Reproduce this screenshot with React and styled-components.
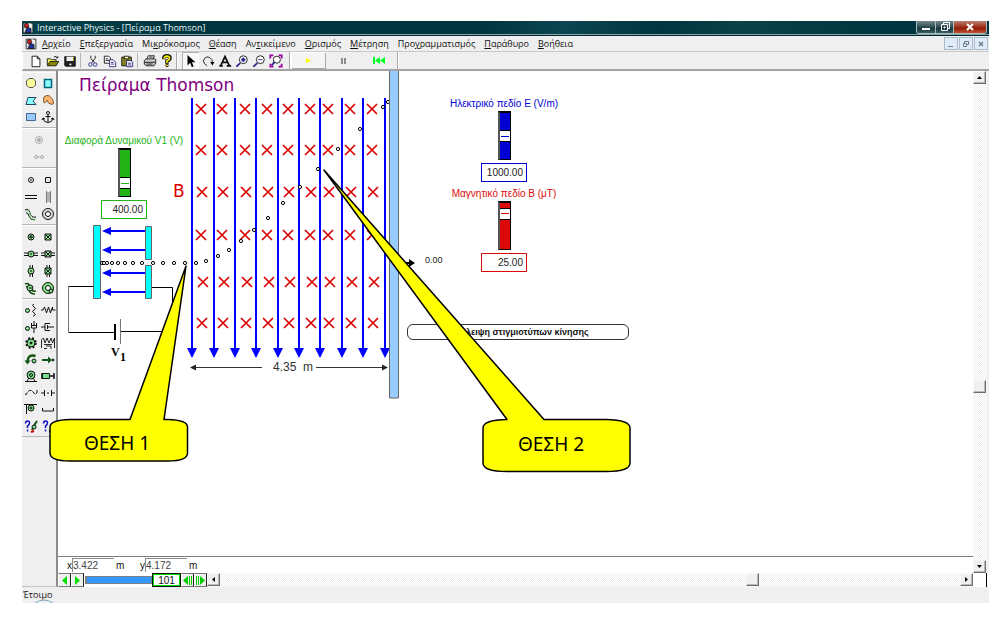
import React, { useState } from 'react';
import styled, { createGlobalStyle } from 'styled-components';

const GlobalStyle = createGlobalStyle`
    * {
        box-sizing: border-box;
    }

    body {
        margin: 0;
        background: #fff;
        font-family: "Open Sans", "Noto Sans", sans-serif;
        font-size: 9px;
        color: #111;
    }

    button, input {
        margin: 0;
        padding: 0;
        border: 0;
        border-radius: 0;
        background: none;
        font: inherit;
        color: inherit;
    }
`

const Page = styled.div`
    display: flex;
    min-height: 100vh;
    padding: 21px 11px 17px 22px;
`

const Window = styled.div`
    flex: 1;
    min-width: 0;
    display: flex;
    flex-direction: column;
    background: #efefef;
`

const TitleBar = styled.header`
    display: flex;
    align-items: center;
    gap: 3px;
    height: 15px;
    padding: 0 2px 0 0;
    background: linear-gradient(100deg, #06434b 0%, #00343e 18%, #00353f 48%, #0d4650 56%, #00343e 66%, #0b4049 74%, #00343e 90%);
    border-bottom: 1px solid #00262e;
    box-shadow: inset 0 -1px 0 #86a5a8;
    color: #e6f5f5;
`

const Title = styled.h1`
    flex: 1;
    margin: 0;
    font-size: 9px;
    line-height: 12px;
    font-weight: 400;
`

const WindowButtons = styled.div`
    display: flex;
    align-self: flex-start;
    height: 13px;
    border: 1px solid #a9bcbd;
    border-top: 0;
    border-radius: 0 0 3px 3px;
    overflow: hidden;
`

const WindowButton = styled.button`
    display: flex;
    align-items: center;
    justify-content: center;
    width: ${({ $close }) => ($close ? '33px' : '18px')};
    background: ${({ $close }) => ($close
        ? 'linear-gradient(#b98176, #a02c14 50%, #8c1d06 60%, #c8502f)'
        : 'linear-gradient(#75898c, #2d4d53 50%, #15363d 60%, #3b5c62)')};
    border-left: ${({ $first }) => ($first ? '0' : '1px solid #a9bcbd')};
`

const MenuBar = styled.nav`
    display: flex;
    align-items: center;
    height: 16px;
    padding: 0 1px 0 3px;
    border-bottom: 1px solid #c9c9c9;
`

const MenuList = styled.div`
    flex: 1;
    display: flex;
    gap: 9px;
    padding-left: 5px;
`

const MenuItem = styled.button`
    line-height: 13px;
    white-space: nowrap;
`

const ChildButtons = styled.div`
    display: flex;
    gap: 1px;
`

const ChildButton = styled.button`
    display: flex;
    align-items: center;
    justify-content: center;
    width: 14px;
    height: 13px;
    background: #dfebf6;
    border: 1px solid #a9bccd;
`

const ToolBar = styled.div`
    display: flex;
    align-items: stretch;
    height: 19px;
    padding-left: 3px;
    border-bottom: 2px solid #a3a3a3;
    border-left: 1px solid #fff;
`

const ToolSet = styled.div`
    display: flex;
    align-items: stretch;
    padding: 0 ${({ $pad }) => $pad || 1}px;
    border-right: 1px solid #a8a8a8;
    box-shadow: 1px 0 0 #fff;
`

const ToolButton = styled.button`
    display: flex;
    align-items: center;
    justify-content: center;
    width: ${({ $wide }) => ($wide ? '35px' : '17px')};
    height: 17px;
    ${({ $pressed }) => $pressed && 'background: #f8f8f8; box-shadow: inset 1px 1px 0 #b0b0b0, inset -1px -1px 0 #fff;'}
    ${({ $raised }) => $raised && 'background: #f4f4f4; box-shadow: inset 1px 1px 0 #fff, inset -1px -1px 0 #a8a8a8;'}
`

const Divider = styled.span`
    width: 1px;
    margin: 1px 3px 1px 2px;
    background: #b4b4b4;
`

const Body = styled.div`
    flex: 1;
    display: flex;
`

const SideBar = styled.aside`
    width: 36px;
    padding-top: 1px;
    border-right: 2px solid #8b8b8b;
    border-bottom: 1px solid #c4c4c4;
`

const Palette = styled.div`
    display: grid;
    grid-template-columns: repeat(${({ $columns }) => $columns}, 1fr);
    grid-auto-rows: 1fr;
    height: ${({ $height }) => $height}px;
    padding: 2px 0;
    border-top: 1px solid #fff;
    border-bottom: 1px solid #b5b5b5;
`

const PaletteButton = styled.button`
    display: flex;
    align-items: center;
    justify-content: center;
    min-width: 0;
    min-height: 0;
`

const Workspace = styled.div`
    flex: 1;
    min-width: 0;
    display: flex;
    flex-direction: column;
`

const WorkRow = styled.div`
    flex: 1;
    display: flex;
`

const Document = styled.div`
    flex: 1;
    min-width: 0;
    display: flex;
    flex-direction: column;
    background: #fff;
`

const Canvas = styled.main`
    position: relative;
    z-index: 1;
    flex: 1;
    font-family: "Liberation Sans", sans-serif;
`

const Scene = styled.svg`
    position: absolute;
    top: 0;
    left: 0;
    overflow: visible;
    pointer-events: none;
`

const Control = styled.div`
    position: absolute;
    left: ${({ $x }) => $x}px;
    top: ${({ $y }) => $y}px;
    width: 120px;
    display: flex;
    flex-direction: column;
    align-items: center;
    color: ${({ $color }) => $color};
`

const ControlLabel = styled.label`
    font-size: 10px;
    line-height: 15px;
    white-space: nowrap;
`

const ControlSlider = styled.input`
    appearance: none;
    writing-mode: vertical-lr;
    direction: rtl;
    width: 13px;
    height: 49px;
    margin-bottom: 3px;
    background: currentColor;
    border: 1px solid #000;
    border-top-width: 2px;
    border-left: 2px solid #555;

    &::-webkit-slider-thumb {
        appearance: none;
        width: 10px;
        height: 12px;
        background: linear-gradient(currentColor, currentColor) center / 8px 1px no-repeat #fff;
        border: solid #000;
        border-width: 1px 0;
    }
`

const ControlValue = styled.input`
    width: 46px;
    height: 19px;
    padding-right: 3px;
    background: #fff;
    border: 1px solid ${({ $color }) => $color};
    color: #222;
    font-size: 10px;
    text-align: right;
`

const EraseButton = styled.button`
    position: absolute;
    left: 349px;
    top: 253px;
    width: 222px;
    height: 16px;
    background: #fff;
    border: 1px solid #333;
    border-radius: 6px;
    font-size: 9px;
    line-height: 14px;
    font-weight: 700;
    white-space: nowrap;
`

const Coordinates = styled.div`
    display: flex;
    align-items: center;
    height: 17px;
    padding-left: 9px;
    border-top: 1px solid #7d7d7d;
    font-family: "Liberation Sans", sans-serif;
    font-size: 10px;
`

const CoordinateInput = styled.input`
    width: 42px;
    height: 14px;
    border-top: 1px solid #8c8c8c;
    border-left: 1px solid #8c8c8c;
    color: #444;
`

const Unit = styled.span`
    width: 26px;
    padding-left: 2px;
`

const BottomBar = styled.div`
    display: flex;
    height: 14px;
    background: #fff;
`

const FrameButton = styled.button`
    display: flex;
    align-items: center;
    justify-content: center;
    width: 13px;
    background: #efefef;
    border: 1px solid #777;
    border-left-color: #fff;
    border-right-color: #222;
`

const FrameSlider = styled.input`
    appearance: none;
    width: 67px;
    margin: 3px 0 3px 1px;
    background: #3399ff;
    border: 1px solid #808080;
    border-left-width: 2px;

    &::-webkit-slider-thumb {
        appearance: none;
        width: 1px;
        height: 1px;
    }
`

const FrameNumber = styled.output`
    width: 29px;
    border: 2px solid #00e000;
    outline: 1px solid #111;
    outline-offset: -1px;
    background: #fff;
    font-family: "Liberation Sans", sans-serif;
    font-size: 10px;
    line-height: 11px;
    text-align: center;
`

const ScrollTrack = styled.div`
    display: flex;
    flex-direction: ${({ $vertical }) => ($vertical ? 'column' : 'row')};
    ${({ $vertical }) => ($vertical ? 'width: 14px; margin-right: 2px;' : 'flex: 1;')}
    background: repeating-conic-gradient(#efefef 0 25%, #fff 0 50%) 0 0 / 2px 2px;
`

const ScrollGap = styled.span`
    flex: ${({ $size }) => $size};
`

const ScrollButton = styled.button`
    display: flex;
    align-items: center;
    justify-content: center;
    width: 13px;
    height: 13px;
    background: #f0f0f0;
    border: 1px solid #f8f8f8;
    border-right-color: #6e6e6e;
    border-bottom-color: #6e6e6e;
    box-shadow: inset -1px -1px 0 #b8b8b8;
`

const Corner = styled.span`
    width: 14px;
    margin-right: 2px;
    border-right: 1px solid #000;
`

const StatusBar = styled.footer`
    display: flex;
    align-items: center;
    height: 16px;
    padding-left: 1px;
    position: relative;
    line-height: 12px;
`

const StatusGlow = styled.svg`
    position: absolute;
    left: 12px;
    bottom: 0;
`

const Icon = ({ children, size = 16 }) => (
    <svg width={size} height={size} viewBox="0 0 16 16" fill="none" stroke="#111" strokeWidth="1" aria-hidden="true">
        {children}
    </svg>
)

const G = '#7fe08a';

const toolIcons = {
    new: <path d="M3.5 2.5h6l3 3v9h-9zM9.5 2.5v3h3" fill="#fff" />,
    open: <><path d="M1.5 13V5.500h4l1 1h5v2" fill="#ff6" /><path d="M1.500 13.500l3-5h10l-3 5z" fill="#8a8500" /><path d="M9 3.500q3-2 4 1M13.500 2.500v2h-2" /></>,
    save: <><path d="M2 3h12v11H3l-1-1z" fill="#222" /><path d="M4 3h8v5H4z" fill="#eee" stroke="none" /><path d="M12 3v5" stroke="#a8a000" /><path d="M8.500 11v2" stroke="#fff" strokeWidth="2" /></>,
    cut: <><path d="M5.500 2v3l4 5M10.500 2v3l-4 5" /><circle cx="5" cy="12" r="2" stroke="#22228a" /><circle cx="10.500" cy="12" r="2" stroke="#22228a" /></>,
    copy: <><path d="M1.500 2.500h5l2 2v6h-7zM3 5.500h3M3 7.500h4" fill="#fff" /><path d="M7.500 6.500h4l3 3v5h-7zM9 9.500h3M9 11.500h4" fill="#fff" stroke="#22227a" /></>,
    paste: <><path d="M2 3.500h11v10H2z" fill="#8a8420" /><path d="M5 2.500h5v3H5z" fill="#ffc" /><path d="M7.500 7.500h5l2 2v5h-7zM9 10.500h4M9 12.500h4" fill="#fff" stroke="#22227a" /></>,
    print: <><path d="M4.500 6l1.500-4h7l-1.500 4" fill="#fff" /><path d="M1.500 7.500l2-2h10l1 1v4l-2 3h-9l-2-2z" fill="#ccc" /><path d="M2 9.500h12M4 11.500h7M7 3.500h4" /></>,
    help: <><path d="M4.500 6V4q0-2 3.500-2t3.500 2.500q0 2-3.500 3.500v3" strokeWidth="4" /><path d="M5 5.500V4q.5-1.500 3-1.500t3 2q0 2-3 3.500v2" stroke="#fff000" strokeWidth="2" /><circle cx="8" cy="13" r="1.500" fill="#fff000" /></>,
    arrow: <path d="M4 1v12l3-3 2 5 2-1-2-4.500h4z" fill="#000" stroke="none" />,
    rotate: <><path d="M4 11Q1.500 8 4 5t6-1 3 6" /><path d="M10.500 9h5L13 13z" fill="#000" stroke="none" /><path d="M4 11l3 2.500" /></>,
    text: <path d="M3 13.500L8 3l5 10.500M5 9.500h6M1.500 13.500h4M10 13.500h5" strokeWidth="2" />,
    zoomIn: <><circle cx="9.500" cy="6.500" r="4.500" fill="#fff" /><path d="M1.500 14.500l4.500-4" stroke="#22228a" strokeWidth="2" /><path d="M7 6.500h5M9.500 4v5" stroke="#22228a" strokeWidth="2" /></>,
    zoomOut: <><circle cx="9.500" cy="6.500" r="4.500" fill="#fff" /><path d="M1.500 14.500l4.500-4" stroke="#22228a" strokeWidth="2" /><path d="M7 6.500h5" stroke="#22228a" /></>,
    zoomFit: <><circle cx="9" cy="6.500" r="4" fill="#fff" /><path d="M3 13l3.500-4" stroke="#22228a" strokeWidth="2" /><path d="M1.500 5V1.500H5M11 1.500h3.500V5M14.500 11v3.500H11M5 14.500H1.500V11" stroke="#a000a0" strokeWidth="2" /></>,
}

const paletteIcons = {
    circle: <path d="M6 3.500h4L12.500 6v4L10 12.500H6L3.500 10V6z" fill="#ffff99" stroke="#555" />,
    square: <path d="M4.500 4.500h7v8h-7z" fill="#8ff" stroke="#067" strokeWidth="1.500" />,
    polygon: <path d="M3 12.500l2-7h8l-3 3.500 3 3.500z" fill="#8ff" stroke="#246" />,
    curve: <path d="M3.500 7q0-3 3-3.500t5 2.500 2 5-3 1-3-3-2 1-2-3z" fill="#ffb56b" stroke="#753" />,
    rect: <path d="M3.500 4.500h9v7h-9z" fill="#9cf" stroke="#468" />,
    anchor: <><circle cx="8" cy="4" r="1.500" /><path d="M8 6v7M5.500 7.500h5M3 9.500q1 4 5 4t5-4M2 11l1-2 2 1M14 11l-1-2-2 1" /></>,
    motorGhost: <g stroke="#aaa"><circle cx="8" cy="8" r="3.500" /><circle cx="8" cy="8" r="1.500" fill="#aaa" /></g>,
    linkGhost: <g stroke="#aaa"><circle cx="5" cy="8" r="1.500" /><circle cx="11" cy="8" r="1.500" /><path d="M7 8h2" /></g>,
    point: <><circle cx="8" cy="8" r="2.500" /><path d="M7 8h2" /></>,
    squarePoint: <><path d="M5.500 5.500h5v5h-5z" /><path d="M5 5l6 6" stroke="#999" strokeWidth=".5" /></>,
    slotH: <path d="M2 6.500h12M2 9.500h12" />,
    slotV: <path d="M6.500 2v12M10.500 2v12M7 4h3M7 6h3M7 8h3M7 10h3M7 12h3" stroke="#777" />,
    curveSlot: <><path d="M2 4q4-2 5 3t6 4M3 7q2-1 3 3t6 4" /><path d="M3 5q4-1 4 4t6 4" stroke={G} /></>,
    ring: <><circle cx="8" cy="8" r="5.500" fill="#ddd" /><circle cx="8" cy="8" r="2.500" fill="#fff" /></>,
    pin: <><circle cx="8" cy="8" r="3" fill={G} /><path d="M6 8h4M8 6v4" /></>,
    pinSquare: <><path d="M5 5h6v6H5z" fill={G} /><path d="M5 5l6 6M11 5l-6 6" /></>,
    pinSlotH: <><path d="M1 7h14M1 9.500h14" /><circle cx="8" cy="8" r="3" fill={G} /><path d="M7 8h2" /></>,
    boxSlotH: <><path d="M1 7h14M1 9.500h14" /><path d="M5 5h6v6H5z" fill={G} /><path d="M5 5l6 6M11 5l-6 6" /></>,
    pinSlotV: <><path d="M7 2v12M9.500 2v12" /><circle cx="8" cy="8" r="3" fill={G} /><path d="M7 8h2" /></>,
    boxSlotV: <><path d="M7 2v12M9.500 2v12" /><path d="M5 5h6v6H5z" fill={G} /><path d="M5 5l6 6M11 5l-6 6" /></>,
    pinCurve: <><path d="M2 4q4-2 5 3t6 4M3 7q2-1 3 3t6 4" stroke="#151" strokeWidth="1.500" /><circle cx="7" cy="8" r="3" fill={G} /><path d="M6 8h3" /></>,
    pinRing: <><circle cx="8" cy="8" r="5.500" fill={G} /><circle cx="8" cy="8" r="2.500" fill="#fff" /><circle cx="11" cy="11" r="2" fill={G} /></>,
    spinSpring: <><circle cx="4.500" cy="8.500" r="2" fill={G} /><path d="M11 2q-3 1 0 3t0 3 0 3-1 3" /></>,
    spring: <path d="M1 8h2l1.500-3 2 6 2-6 2 6 2-6v3h3" />,
    spinDamper: <><circle cx="4.500" cy="9.500" r="2" fill={G} /><path d="M11 2v5M8.500 4v5h5V4M11 9v5M9 6.500h4" /></>,
    damper: <path d="M1 8h4M5 4.500v7M5 4.500h5M5 11.500h5M7.500 6v4M7.500 8H14" />,
    gear: <><circle cx="8" cy="8" r="4" fill={G} /><circle cx="8" cy="8" r="5" strokeDasharray="2 2" strokeWidth="1.500" /><circle cx="8" cy="8" r="1" fill="#111" /></>,
    springDamper: <path d="M1.500 13V5l2-2 1.500 5 2-5 2 5 2-5 1.500 5 2-5v10M4 9.500h8M4 13.500h3M6 11h5v3" strokeWidth=".9" />,
    torque: <><path d="M12.500 4Q5 2 4.500 9" stroke="#151" strokeWidth="2.500" /><path d="M1.500 8.500h6l-3 4z" fill="#151" stroke="none" /><circle cx="11" cy="9" r="2" fill={G} /></>,
    force: <><path d="M2 8h8" strokeWidth="2" stroke="#151" /><path d="M8 4.500l4 3.500-4 3.500z" fill="#151" stroke="none" /><circle cx="13" cy="8" r="1" fill={G} /></>,
    motor: <><circle cx="8" cy="7" r="4" fill={G} /><circle cx="8" cy="7" r="1.500" /><path d="M2 13.500h12M4 13l2-3M12 13l-2-3" /></>,
    actuator: <><path d="M2.500 5.500h7v5h-7z" fill={G} /><path d="M9.500 8h5M14 5v6M2 5v6" strokeWidth="1.500" /></>,
    rope: <path d="M2 9q1 2 2-1 3-5 6-1t4 0V5" strokeDasharray="4 1" />,
    separator: <path d="M1 8h3M4.500 5v6M11.500 5v6M12 8h3M8 7v2" />,
    pulley: <><path d="M1 3.500h13M3.500 4v9" /><circle cx="8" cy="7" r="3" fill={G} /><circle cx="8" cy="7" r="1" /></>,
    rod: <path d="M2.500 7v3h11V7" />,
    helpForce: <><path d="M2.500 5.500Q2.500 3 4.500 3t2 2q0 2-2 3v2M4.500 11.500v2" stroke="#11c" strokeWidth="1.500" /><path d="M9 12l3-6 2-3" stroke="#151" strokeWidth="2" /><circle cx="11" cy="9" r="2" fill={G} /><path d="M8 14l3-1" stroke="#c00" strokeWidth="2" /></>,
    helpRod: <><path d="M3.500 5.500Q3.500 3 5.500 3t2 2q0 2-2 3v2M5.500 11.500v2" stroke="#11c" strokeWidth="1.500" /><path d="M9 13h6" strokeWidth="2" /></>,
}

const palettes = [
    { height: 56, columns: 2, items: ['circle', 'square', 'polygon', 'curve', 'rect', 'anchor'] },
    { height: 40, columns: 1, items: ['motorGhost', 'linkGhost'] },
    { height: 57, columns: 2, items: ['point', 'squarePoint', 'slotH', 'slotV', 'curveSlot', 'ring'] },
    { height: 74, columns: 2, items: ['pin', 'pinSquare', 'pinSlotH', 'boxSlotH', 'pinSlotV', 'boxSlotV', 'pinCurve', 'pinRing'] },
    {
        height: 138,
        columns: 2,
        items: ['spinSpring', 'spring', 'spinDamper', 'damper', 'gear', 'springDamper', 'torque', 'force',
            'motor', 'actuator', 'rope', 'separator', 'pulley', 'rod', 'helpForce', 'helpRod'],
    },
]

// [before, access key, after]
const menus = [
    ['', 'Α', 'ρχείο'],
    ['', 'Ε', 'πεξεργασία'],
    ['Μι', 'κ', 'ρόκοσμος'],
    ['', 'Θ', 'έαση'],
    ['Αν', 'τ', 'ικείμενο'],
    ['', 'Ο', 'ρισμός'],
    ['', 'Μ', 'έτρηση'],
    ['Προ', 'γ', 'ραμματισμός'],
    ['', 'Π', 'αράθυρο'],
    ['', 'Β', 'οήθεια'],
]

const fieldLines = [192, 214, 235, 256, 278, 299, 320, 342, 363, 385];
const crossColumns = [201, 222, 245, 267, 288, 310, 328, 350, 372];
const crossRows = [[109, 0], [150, 0], [192, 1], [235, 0], [282, 2], [323, 1]];
const plateArrows = [231, 250, 273, 292];
const track = [
    [102, 263], [104, 263], [107, 263], [112, 263], [118, 263], [125, 263], [133, 263], [142, 263],
    [153, 263], [163, 263], [174, 263], [185, 263], [196, 263], [206, 261], [218, 256], [229, 250],
    [241, 241], [254, 230], [268, 218], [283, 203], [300, 187], [318, 169], [338, 149], [360, 129],
    [383, 107], [388, 102],
];

const Experiment = () => (
    <Scene width="632" height="486" viewBox="58 71 632 486" fontFamily="Liberation Sans, sans-serif">
        <text x="79" y="91" fontFamily="DejaVu Sans, sans-serif" fontSize="17" fill="#800080">Πείραμα Thomson</text>
        <text x="173" y="197" fontFamily="DejaVu Sans, sans-serif" fontSize="17" fill="#dd0000">B</text>

        <g fill="none" stroke="#000">
            <path d="M94 286.500H68.500M68.500 332.500H114M121 331.500h51.500M152 287.500h20.500v44" />
            <path d="M68.500 286v46M120.500 319v25" stroke="#777" />
            <path d="M115 324v16" strokeWidth="2" />
        </g>
        <g fill="#00ffff" stroke="#666">
            <path d="M93.500 225.500h7v73h-7zM145.500 226.500h6v33h-6zM145.500 265.500h6v33h-6z" />
        </g>
        <text x="111" y="356" fontFamily="Liberation Serif, serif" fontSize="12" fontWeight="700">V</text>
        <text x="120" y="361" fontFamily="Liberation Serif, serif" fontSize="12" fontWeight="700">1</text>

        {plateArrows.map((y) => (
            <g key={y} fill="#0000ff">
                <path d={`M108 ${y - 1}h37v2h-37z`} />
                <path d={`M102 ${y}l9-4v8z`} />
            </g>
        ))}

        {crossRows.map(([y, dx]) => crossColumns.map((x) => (
            <path key={`${x}-${y}`} d={`M${x + dx - 5} ${y - 5}l10 10m0-10l-10 10`} stroke="#dd0000" strokeWidth="1.700" />
        )))}
        {fieldLines.map((x) => (
            <g key={x} fill="#0000ff">
                <path d={`M${x - 1} 98h2v252h-2z`} />
                <path d={`M${x - 5} 348h10l-5 10z`} />
            </g>
        ))}
        {track.map(([x, y]) => (
            <circle key={`${x}-${y}`} cx={x} cy={y} r="1.600" fill="#fff" stroke="#000" />
        ))}

        <path d="M389.500 71v327h9V71" fill="#99ccff" stroke="#666" />
        <path d="M192 367.500h70M316 367.500h70" stroke="#333" />
        <path d="M190 367.500l6-3v6zM388 367.500l-6-3v6z" fill="#222" />
        <text x="273" y="371" fontSize="12" fill="#333" xmlSpace="preserve">4.35  m</text>
        <path d="M404 263h7" stroke="#000" strokeWidth="2" />
        <path d="M409 259l6 4-6 4z" />
        <text x="425" y="263" fontSize="9" fill="#222">0.00</text>
    </Scene>
)

const Callouts = () => (
    <Scene width="632" height="486" viewBox="58 71 632 486" fontFamily="Noto Sans, sans-serif" fontSize="19">
        <g fill="#ffff00" stroke="#000" strokeWidth="1.500" strokeLinejoin="round">
            <path d="M70 419.500H130L186 266L164 419.500H168Q187.500 420 187.500 427V453Q187.500 461 168 461H70Q50 461 50 453V427Q50 420 70 419.500Z" />
            <path d="M507 419.500L324 170L544 419.500H606Q630 420 630 428V463Q630 471.500 606 471.500H507Q483 471.500 483 463V428Q483 420 507 419.500Z" />
        </g>
        <text x="117" y="450" textAnchor="middle">ΘΕΣΗ 1</text>
        <text x="551" y="451" textAnchor="middle">ΘΕΣΗ 2</text>
    </Scene>
)

const SliderControl = ({ id, label, color, x, y, max, start }) => {
    const [value, setValue] = useState(start);

    return (
        <Control $x={x} $y={y} $color={color}>
            <ControlLabel htmlFor={id}>{label}</ControlLabel>
            <ControlSlider id={id} type="range" min="0" max={max} value={value} onChange={(e) => setValue(Number(e.target.value))} />
            <ControlValue
                $color={color}
                aria-label={label}
                value={value.toFixed(2)}
                onChange={(e) => setValue(Number(e.target.value) || 0)}
            />
        </Control>
    )
}

const Triangle = ({ d, fill = '#000', size = 9 }) => (
    <svg width={size} height={size} viewBox="0 0 9 9" aria-hidden="true">
        <path d={d} fill={fill} />
    </svg>
)

const Tools = ({ names, pressed }) => names.map((name) => (
    <ToolButton key={name} aria-label={name} $pressed={name === pressed}>
        <Icon size={14}>{toolIcons[name]}</Icon>
    </ToolButton>
))

const AppIcon = () => (
    <Icon size={12}>
        <path d="M1.500 1.500h13v13h-13z" fill="#ddd" />
        <circle cx="6" cy="5" r="3" fill="#c22" />
        <path d="M4 14l3-7 5 2v5z" fill="#239" />
        <path d="M9 2l4 4" stroke="#fff" strokeWidth="2" />
    </Icon>
)

const App = () => {
    const [frame, setFrame] = useState(101);

    return (
        <Page>
            <GlobalStyle />
            <Window>
                <TitleBar>
                    <AppIcon />
                    <Title>Interactive Physics - [Πείραμα Thomson]</Title>
                    <WindowButtons>
                        <WindowButton $first aria-label="Minimize">
                            <svg width="10" height="10"><path d="M1 6h8v2H1z" fill="#fff" /></svg>
                        </WindowButton>
                        <WindowButton aria-label="Restore">
                            <svg width="10" height="10" fill="none" stroke="#fff"><path d="M3.500 2V.5h6v6H8" /><path d="M1.500 2.500h6v6h-6z" /><path d="M4 5h1v1H4z" /></svg>
                        </WindowButton>
                        <WindowButton $close aria-label="Close">
                            <svg width="10" height="10"><path d="M2 2l6 6M8 2L2 8" stroke="#fff" strokeWidth="2" /></svg>
                        </WindowButton>
                    </WindowButtons>
                </TitleBar>

                <MenuBar>
                    <AppIcon />
                    <MenuList>
                        {menus.map(([before, key, after]) => (
                            <MenuItem key={key + after}>{before}<u>{key}</u>{after}</MenuItem>
                        ))}
                    </MenuList>
                    <ChildButtons>
                        <ChildButton aria-label="Minimize document">
                            <svg width="8" height="8"><path d="M1 6h5v1H1z" fill="#6b7d90" /></svg>
                        </ChildButton>
                        <ChildButton aria-label="Restore document">
                            <svg width="8" height="8" fill="none" stroke="#6b7d90"><path d="M2.500 3V1.500h4v3H5M1.500 3.500h3v3h-3zM2 1.500h5" /></svg>
                        </ChildButton>
                        <ChildButton aria-label="Close document">
                            <svg width="8" height="8"><path d="M2 2l4 4M6 2L2 6" stroke="#6b7d90" strokeWidth="1.500" /></svg>
                        </ChildButton>
                    </ChildButtons>
                </MenuBar>

                <ToolBar>
                    <ToolSet>
                        <Tools names={['new', 'open', 'save']} />
                        <Divider />
                        <Tools names={['cut', 'copy', 'paste']} />
                        <Divider />
                        <Tools names={['print', 'help']} />
                    </ToolSet>
                    <ToolSet $pad={5}>
                        <Tools names={['arrow', 'rotate', 'text', 'zoomIn', 'zoomOut', 'zoomFit']} pressed="arrow" />
                    </ToolSet>
                    <ToolSet>
                        <ToolButton $wide $raised aria-label="Run">
                            <Triangle d="M2 2l5 2.500-5 2.500z" fill="#ffff00" />
                        </ToolButton>
                        <ToolButton $wide aria-label="Pause">
                            <Triangle d="M2 2h2v6H2zM5 2h2v6H5z" fill="#8c8c8c" />
                        </ToolButton>
                        <ToolButton $wide aria-label="Reset">
                            <svg width="12" height="9"><path d="M0 1h2v7H0zM7 1v7L2 4.500zM12 1v7L7 4.500z" fill="#00ff22" /></svg>
                        </ToolButton>
                    </ToolSet>
                </ToolBar>

                <Body>
                    <SideBar>
                        {palettes.map(({ height, columns, items }) => (
                            <Palette key={items[0]} $height={height} $columns={columns}>
                                {items.map((name) => (
                                    <PaletteButton key={name} aria-label={name}>
                                        <Icon size={16}>{paletteIcons[name]}</Icon>
                                    </PaletteButton>
                                ))}
                            </Palette>
                        ))}
                    </SideBar>

                    <Workspace>
                        <WorkRow>
                            <Document>
                                <Canvas>
                                    <Experiment />
                                    <SliderControl id="voltage" label="Διαφορά Δυναμικού V1 (V)" color="#22b414" x={6} y={62} max={2000} start={400} />
                                    <SliderControl id="electric" label="Ηλεκτρικό πεδίο Ε (V/m)" color="#0000d4" x={386} y={25} max={2000} start={1000} />
                                    <SliderControl id="magnetic" label="Μαγνητικό πεδίο Β (μΤ)" color="#dd0808" x={386} y={115} max={29} start={25} />
                                    <EraseButton>Απάλειψη στιγμιοτύπων κίνησης</EraseButton>
                                    <Callouts />
                                </Canvas>
                                <Coordinates>
                                    <label htmlFor="coord-x">x</label>
                                    <CoordinateInput id="coord-x" defaultValue="3.422" />
                                    <Unit>m</Unit>
                                    <label htmlFor="coord-y">y</label>
                                    <CoordinateInput id="coord-y" defaultValue="4.172" />
                                    <Unit>m</Unit>
                                </Coordinates>
                            </Document>
                            <ScrollTrack $vertical>
                                <ScrollButton aria-label="Scroll up"><Triangle d="M2 6l2.500-3L7 6z" /></ScrollButton>
                                <ScrollGap $size={297} />
                                <ScrollButton aria-label="Vertical position" />
                                <ScrollGap $size={167} />
                                <ScrollButton aria-label="Scroll down"><Triangle d="M2 3l2.500 3L7 3z" /></ScrollButton>
                            </ScrollTrack>
                        </WorkRow>
                        <BottomBar>
                            <FrameButton aria-label="Play backward"><Triangle d="M7 0v9L2 4.500z" fill="#00dd00" /></FrameButton>
                            <FrameButton aria-label="Play forward"><Triangle d="M2 0v9l5-4.500z" fill="#00dd00" /></FrameButton>
                            <FrameSlider type="range" min="0" max="101" aria-label="Frame" value={frame} onChange={(e) => setFrame(Number(e.target.value))} />
                            <FrameNumber>{frame}</FrameNumber>
                            <FrameButton aria-label="Step back"><Triangle d="M5 0v9L0 4.500zM6 0h1v9H6zM8 0h1v9H8z" fill="#00cc00" /></FrameButton>
                            <FrameButton aria-label="Step forward"><Triangle d="M4 0v9l5-4.500zM0 0h1v9H0zM2 0h1v9H2z" fill="#00cc00" /></FrameButton>
                            <ScrollTrack>
                                <ScrollButton aria-label="Scroll left"><Triangle d="M6 2L3 4.500 6 7z" /></ScrollButton>
                                <ScrollGap $size={527} />
                                <ScrollButton aria-label="Horizontal position" />
                                <ScrollGap $size={201} />
                                <ScrollButton aria-label="Scroll right"><Triangle d="M3 2l3 2.500L3 7z" /></ScrollButton>
                            </ScrollTrack>
                            <Corner />
                        </BottomBar>
                    </Workspace>
                </Body>

                <StatusBar>
                    Έτοιμο
                    <StatusGlow width="20" height="4" fill="none" stroke="#7fa8c4"><path d="M1 4q9-6 18 0" /></StatusGlow>
                </StatusBar>
            </Window>
        </Page>
    )
}

export default App;
